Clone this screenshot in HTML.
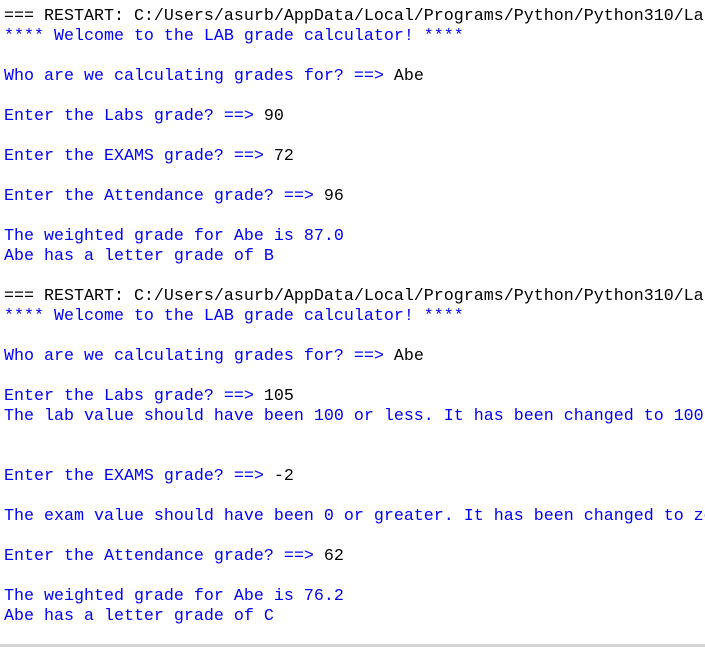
<!DOCTYPE html>
<html><head><style>
html,body{margin:0;padding:0;background:#fff;width:705px;height:647px;overflow:hidden;position:relative}
pre{margin:0;position:absolute;left:4px;top:7px;width:701px;height:640px;overflow:hidden;font-family:"Liberation Mono",monospace;font-size:16.67px;line-height:20px;color:#000;white-space:pre}
.b{color:#0000ff}
.bar{position:absolute;left:0;top:644px;width:705px;height:3px;background:#d4d4d4}
</style></head><body>
<pre>=== RESTART: C:/Users/asurb/AppData/Local/Programs/Python/Python310/Lab
<span class="b">**** Welcome to the LAB grade calculator! ****</span>

<span class="b">Who are we calculating grades for? ==> </span>Abe

<span class="b">Enter the Labs grade? ==> </span>90

<span class="b">Enter the EXAMS grade? ==> </span>72

<span class="b">Enter the Attendance grade? ==> </span>96

<span class="b">The weighted grade for Abe is 87.0
Abe has a letter grade of B</span>

=== RESTART: C:/Users/asurb/AppData/Local/Programs/Python/Python310/Lab
<span class="b">**** Welcome to the LAB grade calculator! ****</span>

<span class="b">Who are we calculating grades for? ==> </span>Abe

<span class="b">Enter the Labs grade? ==> </span>105
<span class="b">The lab value should have been 100 or less. It has been changed to 100.</span>


<span class="b">Enter the EXAMS grade? ==> </span>-2

<span class="b">The exam value should have been 0 or greater. It has been changed to zero.</span>

<span class="b">Enter the Attendance grade? ==> </span>62

<span class="b">The weighted grade for Abe is 76.2
Abe has a letter grade of C</span></pre>
<div class="bar"></div>
</body></html>
